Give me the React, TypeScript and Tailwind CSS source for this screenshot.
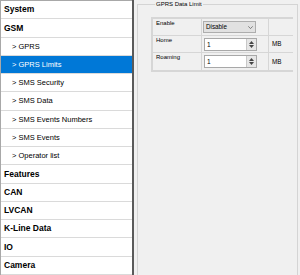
const menu = [
  { label: 'System', head: true },
  { label: 'GSM', head: true },
  { label: '> GPRS' },
  { label: '> GPRS Limits', active: true },
  { label: '> SMS Security' },
  { label: '> SMS Data' },
  { label: '> SMS Events Numbers' },
  { label: '> SMS Events' },
  { label: '> Operator list' },
  { label: 'Features', head: true },
  { label: 'CAN', head: true },
  { label: 'LVCAN', head: true },
  { label: 'K-Line Data', head: true },
  { label: 'IO', head: true },
  { label: 'Camera', head: true },
]

function Spinner() {
  return (
    <div className="w-[10px] h-full bg-[#e6e6e6] border-l border-[#c8c8c8] flex flex-col items-center justify-center gap-[1px]">
      <svg width="5" height="3" viewBox="0 0 5 3"><path d="M0 3 L2.5 0 L5 3Z" fill="#444" /></svg>
      <svg width="5" height="3" viewBox="0 0 5 3"><path d="M0 0 L2.5 3 L5 0Z" fill="#444" /></svg>
    </div>
  )
}

function NumInput({ value }: { value: string }) {
  return (
    <div className="ml-[2px] w-[53px] h-[13px] bg-white border border-[#a8a8a8] flex">
      <span className="flex-1 pl-[2px] text-[6.5px] leading-[11px] text-black">{value}</span>
      <Spinner />
    </div>
  )
}

export default function App() {
  return (
    <div className="flex w-[300px] h-[275px] bg-[#f0f0f0] overflow-hidden font-['Liberation_Sans',Arial,sans-serif]">
      <div className="w-[132px] shrink-0 bg-white border-t border-l border-[#a8a8a8] flex flex-col">
        {menu.map((m) => (
          <div
            key={m.label}
            className={`flex-1 flex items-center border-b border-[#dadada] ${m.active ? 'bg-[#0078d7] text-white' : 'text-black'} ${m.head ? 'pl-[3px] font-bold text-[8.5px]' : 'pl-[11px] text-[7.5px]'}`}
          >
            {m.label}
          </div>
        ))}
      </div>
      <div className="w-[2px] shrink-0 bg-[#5a5a5a]" />
      <div className="flex-1 pl-[3px] pr-[2px] bg-[#f0f0f0]">
        <fieldset className="h-[290px] border border-[#d4d4d4] pl-[13px] pr-[3px]">
          <legend className="ml-[4px] px-[1px] text-[6px] leading-[8px] text-black">GPRS Data Limit</legend>
          <div className="mt-[9px] w-[142px] border-2 border-[#d6d6d6] bg-[#d6d6d6] grid grid-cols-[48px_66px_24px] grid-rows-[16px_16px_17px] gap-px">
            <div className="bg-[#f0f0f0] pl-[3px] pt-[1px] text-[6px] leading-[7px]">Enable</div>
            <div className="bg-[#f0f0f0] pt-[2px]">
              <div className="ml-[1px] w-[53px] h-[12px] bg-[#e1e1e1] border border-[#adadad] flex items-center justify-between px-[2px]">
                <span className="text-[6.3px] leading-none">Disable</span>
                <svg width="5" height="3" viewBox="0 0 5 3"><path d="M0.3 0.3 L2.5 2.6 L4.7 0.3" fill="none" stroke="#555" strokeWidth="0.7" /></svg>
              </div>
            </div>
            <div className="bg-[#f0f0f0]" />
            <div className="bg-[#f0f0f0] pl-[3px] pt-[1px] text-[6px] leading-[7px]">Home</div>
            <div className="bg-[#f0f0f0] flex items-center"><NumInput value="1" /></div>
            <div className="bg-[#f0f0f0] flex items-center pl-[3px] text-[6.3px]">MB</div>
            <div className="bg-[#f0f0f0] pl-[3px] pt-[1px] text-[6px] leading-[7px]">Roaming</div>
            <div className="bg-[#f0f0f0] flex items-center"><NumInput value="1" /></div>
            <div className="bg-[#f0f0f0] flex items-center pl-[3px] text-[6.3px]">MB</div>
          </div>
        </fieldset>
      </div>
    </div>
  )
}
